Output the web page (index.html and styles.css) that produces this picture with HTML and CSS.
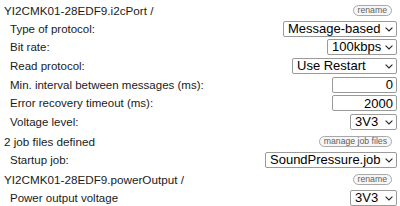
FILE: index.html
```html
<!DOCTYPE html>
<html>
<head>
<meta charset="utf-8">
<link rel="stylesheet" href="styles.css">
</head>
<body>
<div class="panel">
  <div class="row head">
    <span class="title">YI2CMK01-28EDF9.i2cPort /</span>
    <button class="pill">rename</button>
  </div>
  <div class="row">
    <span class="label">Type of protocol:</span>
    <span class="selwrap"><select class="sel w-msg"><option>Message-based</option></select><svg class="chev" viewBox="0 0 8 5"><path d="M0.6 0.6 L4 4 L7.4 0.6"/></svg></span>
  </div>
  <div class="row">
    <span class="label">Bit rate:</span>
    <span class="selwrap"><select class="sel w-kbps"><option>100kbps</option></select><svg class="chev" viewBox="0 0 8 5"><path d="M0.6 0.6 L4 4 L7.4 0.6"/></svg></span>
  </div>
  <div class="row">
    <span class="label">Read protocol:</span>
    <span class="selwrap"><select class="sel w-read"><option>Use Restart</option></select><svg class="chev" viewBox="0 0 8 5"><path d="M0.6 0.6 L4 4 L7.4 0.6"/></svg></span>
  </div>
  <div class="row">
    <span class="label">Min. interval between messages (ms):</span>
    <input class="num" type="text" value="0">
  </div>
  <div class="row">
    <span class="label">Error recovery timeout (ms):</span>
    <input class="num" type="text" value="2000">
  </div>
  <div class="row">
    <span class="label">Voltage level:</span>
    <span class="selwrap"><select class="sel w-volt"><option>3V3</option></select><svg class="chev" viewBox="0 0 8 5"><path d="M0.6 0.6 L4 4 L7.4 0.6"/></svg></span>
  </div>
  <div class="row head">
    <span class="title">2 job files defined</span>
    <button class="pill">manage job files</button>
  </div>
  <div class="row">
    <span class="label">Startup job:</span>
    <span class="selwrap"><select class="sel w-job"><option>SoundPressure.job</option></select><svg class="chev" viewBox="0 0 8 5"><path d="M0.6 0.6 L4 4 L7.4 0.6"/></svg></span>
  </div>
  <div class="row head">
    <span class="title">YI2CMK01-28EDF9.powerOutput /</span>
    <button class="pill">rename</button>
  </div>
  <div class="row">
    <span class="label">Power output voltage</span>
    <span class="selwrap"><select class="sel w-volt"><option>3V3</option></select><svg class="chev" viewBox="0 0 8 5"><path d="M0.6 0.6 L4 4 L7.4 0.6"/></svg></span>
  </div>
</div>
</body>
</html>
```
FILE: styles.css
```css
html, body {
  margin: 0;
  padding: 0;
  background: #ffffff;
}
body {
  font-family: "Liberation Sans", Arial, sans-serif;
  color: #1a1a1a;
  width: 400px;
  height: 206px;
  overflow: hidden;
}
.panel {
  display: flex;
  flex-direction: column;
  padding: 0 3px 0 4px;
}
.row {
  display: flex;
  align-items: center;
  justify-content: space-between;
  height: 18.6px;
}
.head {
  padding-top: 1px;
}
.title {
  font-size: 11.7px;
}
.label {
  font-size: 11.5px;
  padding-left: 6px;
}
.pill {
  font-family: "Liberation Sans", Arial, sans-serif;
  font-size: 8.7px;
  line-height: 9px;
  height: 11px;
  padding: 0 4px;
  margin: 0 5px 0 0;
  border: 1px solid #a8a8a8;
  border-radius: 6px;
  background: #f7f7f7;
  color: #606060;
}
.selwrap {
  position: relative;
  display: inline-flex;
}
.sel {
  -webkit-appearance: none;
  appearance: none;
  font-family: "Liberation Sans", Arial, sans-serif;
  font-size: 13px;
  height: 16px;
  line-height: 14px;
  box-sizing: border-box;
  padding: 0 14px 0 4px;
  margin: 0;
  border: 1px solid #9a9a9a;
  border-radius: 2px;
  background: #fff;
  color: #000;
}
.chev {
  position: absolute;
  right: 4px;
  top: 6px;
  width: 8px;
  height: 5px;
  fill: none;
  stroke: #222;
  stroke-width: 1.1;
  pointer-events: none;
}
.w-msg { width: 114px; }
.w-kbps { width: 70px; }
.w-read { width: 105px; }
.w-volt { width: 47px; }
.w-job { width: 132px; }
.num {
  font-family: "Liberation Sans", Arial, sans-serif;
  font-size: 13px;
  width: 65px;
  height: 16px;
  box-sizing: border-box;
  padding: 0 3px;
  margin: 0;
  border: 1px solid #9a9a9a;
  border-radius: 2px;
  text-align: right;
  color: #000;
}
```
